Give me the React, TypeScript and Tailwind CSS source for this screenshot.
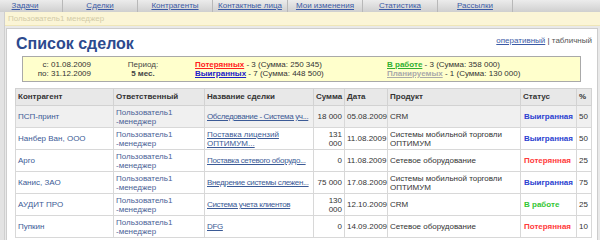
import React from "react";

const nav = ["Задачи", "Сделки", "Контрагенты", "Контактные лица", "Мои изменения", "Статистика", "Рассылки"];

type Row = {
  c: string;
  deal: string;
  wrap?: boolean;
  sum: string;
  date: string;
  prod: string;
  status: "won" | "lost" | "work";
  pct: string;
};

const rows: Row[] = [
  { c: "ПСП-принт", deal: "Обследование - Система уч...", sum: "18 000", date: "05.08.2009", prod: "CRM", status: "won", pct: "50" },
  { c: "Нанбер Ван, ООО", deal: "Поставка лицензий ОПТИМУМ...", wrap: true, sum: "131 000", date: "11.08.2009", prod: "Системы мобильной торговли ОПТИМУМ", status: "won", pct: "50" },
  { c: "Арго", deal: "Поставка сетевого оборудо...", sum: "0", date: "11.08.2009", prod: "Сетевое оборудование", status: "lost", pct: "25" },
  { c: "Канис, ЗАО", deal: "Внедрение системы слежен...", sum: "75 000", date: "17.08.2009", prod: "Системы мобильной торговли ОПТИМУМ", status: "won", pct: "75" },
  { c: "АУДИТ ПРО", deal: "Система учета клиентов", sum: "130 000", date: "12.10.2009", prod: "CRM", status: "work", pct: "25" },
  { c: "Пупкин", deal: "DFG", sum: "0", date: "14.09.2009", prod: "Сетевое оборудование", status: "lost", pct: "10" },
];

const statusEl = (s: Row["status"]) => {
  if (s === "won") return <span className="font-bold text-[#2b3fd0]">Выигранная</span>;
  if (s === "lost") return <span className="font-bold text-[#ff3b3b]">Потерянная</span>;
  return <span className="font-bold text-[#33c633]">В работе</span>;
};

export default function App() {
  return (
    <div
      className="w-[600px] h-[240px] overflow-hidden bg-[#e9e9e9] text-[8px] leading-[10px]"
      style={{ fontFamily: '"Liberation Sans", Arial, sans-serif' }}
    >
      {/* nav */}
      <div className="h-[12px] flex bg-gradient-to-b from-[#ececec] to-[#cfcfcf] ml-[-12px]">
        {nav.map((n) => (
          <div
            key={n}
            className="w-[75px] shrink-0 flex items-center justify-center border-r border-[#b8b8b8]"
          >
            <span className="underline text-[#3b5aa6] text-[8px] leading-[10px]">{n}</span>
          </div>
        ))}
      </div>
      <div className="flex h-[228px]">
        <div className="w-[5px] shrink-0 bg-[#e3e3e3] border-r border-[#cfcfcf]" />
        <div className="flex-1 flex flex-col">
          <div className="h-[14px] bg-[#fbf5d6] border-b border-[#efe6b8] flex items-center pl-[3px] text-[#d2cba8]">
            Пользователь1 менеджер
          </div>
          <div className="h-[2px]" />
          <div className="flex-1 bg-white border-l border-t border-r border-[#cdcdcd] ml-[1px] mr-[3px] pl-[9px] pr-[5px]">
            <div className="flex items-end justify-between h-[24px]">
              <div className="text-[16px] leading-[18px] font-bold text-[#2c4a8e]">
                Список сделок
              </div>
              <div className="text-[8px] mb-[7px]">
                <span className="underline text-[#3b5aa6]">оперативный</span>
                <span className="text-[#333]"> | </span>
                <span className="text-[#555]">табличный</span>
              </div>
            </div>
            <div className="ml-[6px] mr-[11px] mt-[3px] h-[26px] bg-[#ffffcc] border border-[#a9a9a9] flex items-center text-[#333]">
              <div className="w-[68px] text-right leading-[9px]">
                <div>с: 01.08.2009</div>
                <div>по: 31.12.2009</div>
              </div>
              <div className="w-[104px] text-center leading-[9px] text-[#444]">
                <div>Период:</div>
                <div className="font-bold">5 мес.</div>
              </div>
              <div className="w-[192px] leading-[9px]">
                <div>
                  <span className="font-bold underline text-[#ff2020]">Потерянных</span> - 3 (Сумма: 250 345)
                </div>
                <div>
                  <span className="font-bold underline text-[#2020c8]">Выигранных</span> - 7 (Сумма: 448 500)
                </div>
              </div>
              <div className="leading-[9px]">
                <div>
                  <span className="font-bold underline text-[#30b030]">В работе</span> - 3 (Сумма: 358 000)
                </div>
                <div>
                  <span className="font-bold underline text-[#aaaaaa]">Планируемых</span> - 1 (Сумма: 130 000)
                </div>
              </div>
            </div>
            <table className="mt-[6px] -ml-[1px] w-[576px] border-collapse table-fixed">
              <colgroup>
                <col className="w-[98px]" />
                <col className="w-[91px]" />
                <col className="w-[109px]" />
                <col className="w-[31px]" />
                <col className="w-[43px]" />
                <col className="w-[133px]" />
                <col className="w-[56px]" />
                <col className="w-[15px]" />
              </colgroup>
              <thead>
                <tr className="h-[17px] bg-[#e8e8e8] text-[#333] font-bold text-left">
                  <th className="border border-[#d2d2d2] px-[2px]">Контрагент</th>
                  <th className="border border-[#d2d2d2] px-[2px]">Ответственный</th>
                  <th className="border border-[#d2d2d2] px-[2px]">Название сделки</th>
                  <th className="border border-[#d2d2d2] px-[2px]">Сумма</th>
                  <th className="border border-[#d2d2d2] px-[2px]">Дата</th>
                  <th className="border border-[#d2d2d2] px-[2px]">Продукт</th>
                  <th className="border border-[#d2d2d2] px-[2px]">Статус</th>
                  <th className="border border-[#d2d2d2] px-[2px]">%</th>
                </tr>
              </thead>
              <tbody>
                {rows.map((r, i) => (
                  <tr key={i} className={`h-[22px] ${i === 0 ? "bg-[#f0f0f0]" : "bg-white"}`}>
                    <td className="border border-[#d8d8d8] px-[2px] text-[#3b5a96]">{r.c}</td>
                    <td className="border border-[#d8d8d8] px-[2px] text-[#4a6296] leading-[9px]">
                      <div>Пользователь1</div>
                      <div>-менеджер</div>
                    </td>
                    <td className="border border-[#d8d8d8] px-[2px] text-[#3b5a96] leading-[9px]">
                      <div className={r.wrap ? "" : "whitespace-nowrap tracking-[-0.35px]"}>
                        <span className="underline">{r.deal}</span>
                      </div>
                    </td>
                    <td className="border border-[#d8d8d8] px-[2px] text-right text-[#333] leading-[9px]">{r.sum}</td>
                    <td className="border border-[#d8d8d8] px-[2px] text-right text-[#333]">{r.date}</td>
                    <td className="border border-[#d8d8d8] px-[2px] text-[#333] leading-[9px]">{r.prod}</td>
                    <td className="border border-[#d8d8d8] px-[3px] text-[8px]">{statusEl(r.status)}</td>
                    <td className="border border-[#d8d8d8] px-[2px] text-[#333]">{r.pct}</td>
                  </tr>
                ))}
              </tbody>
            </table>
          </div>
        </div>
      </div>
    </div>
  );
}
